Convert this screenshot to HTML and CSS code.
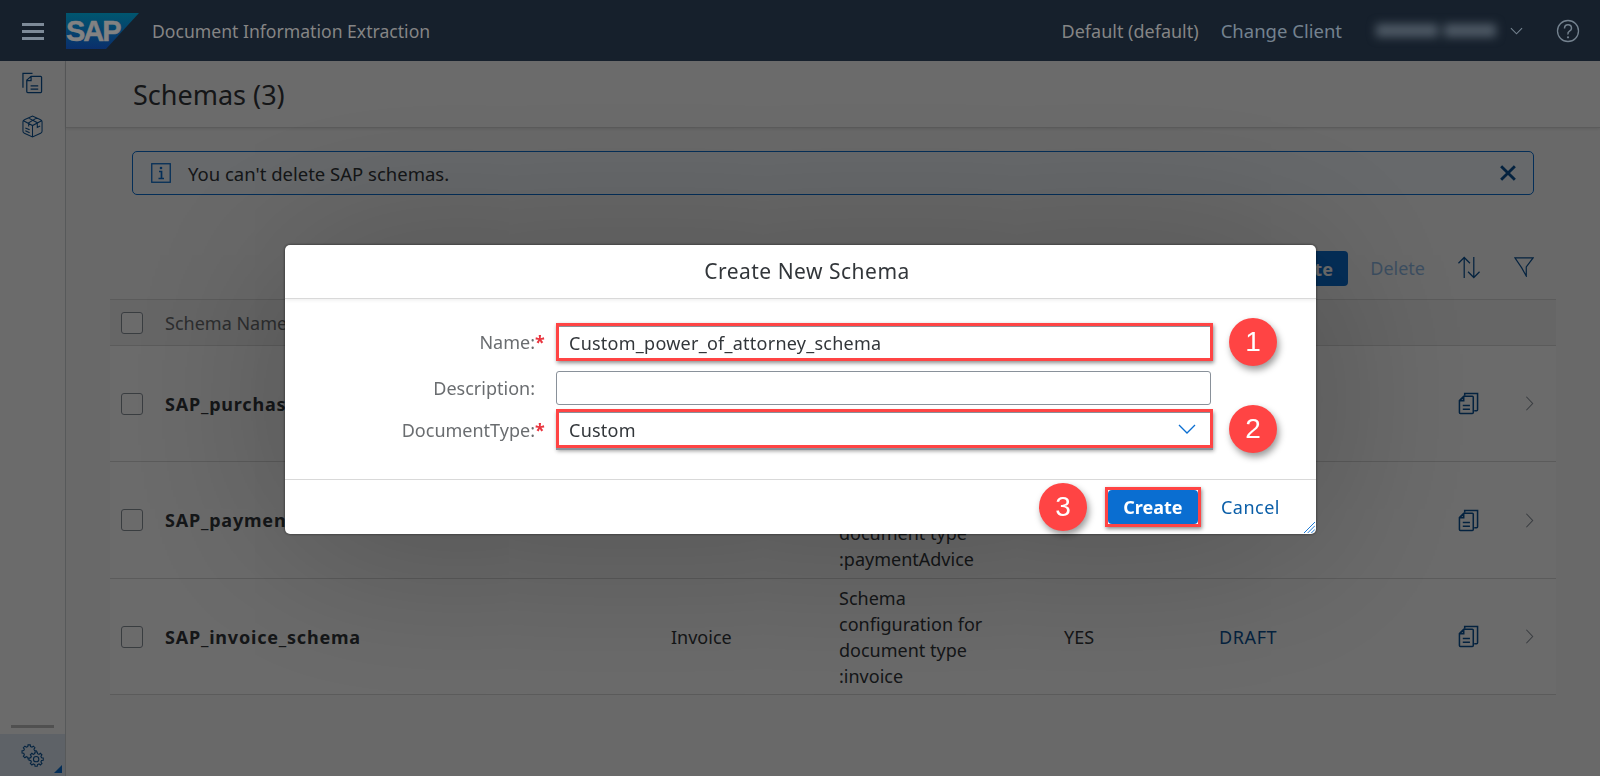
FILE: index.html
```html
<!DOCTYPE html>
<html lang="en">
<head>
  <meta charset="UTF-8">
  <meta name="viewport" content="width=device-width, initial-scale=1.0">
  <title>Document Information Extraction</title>
  <link rel="stylesheet" href="styles.css">
</head>
<body>
  <svg class="defs" width="0" height="0">
    <symbol id="copy" viewBox="0 0 22 24">
      <path d="M7 4V1.500H20.500V18.500Q20.500 19.500 19.500 19.500H17" fill="none" stroke="currentColor" stroke-width="1.600"/>
      <path d="M1.500 9 6 4.500H15Q16 4.500 16 5.500V21.500Q16 22.500 15 22.500H2.500Q1.500 22.500 1.500 21.500ZM5 14h7.500M5 18h7.500M6 5V9H2" fill="none" stroke="currentColor" stroke-width="1.600"/>
    </symbol>
    <symbol id="chev-right" viewBox="0 0 10 18">
      <path d="M1.500 1.500 8.500 9 1.500 16.500" fill="none" stroke="currentColor" stroke-width="1.200"/>
    </symbol>
    <path id="cog" d="M5.630-1.400 7.410-1.170 7.410 1.170 5.630 1.400 4.970 2.990 6.070 4.410 4.410 6.070 2.990 4.970 1.400 5.630 1.170 7.410-1.170 7.410-1.400 5.630-2.990 4.970-4.410 6.070-6.070 4.410-4.970 2.990-5.630 1.400-7.410 1.170-7.410-1.170-5.630-1.400-4.970-2.990-6.070-4.410-4.410-6.070-2.990-4.970-1.400-5.630-1.170-7.410 1.170-7.410 1.400-5.630 2.990-4.970 4.410-6.070 6.070-4.410 4.970-2.990Z"/>
  </svg>

  <header class="shell">
    <svg class="burger" viewBox="0 0 22 17"><path d="M0 1.500h22M0 8.500h22M0 15.500h22" stroke="currentColor" stroke-width="3"/></svg>
    <svg class="logo" viewBox="0 0 74 36">
      <defs>
        <linearGradient id="sapblue" x1="0" y1="0" x2="0" y2="1">
          <stop offset="0" stop-color="#00566f"/>
          <stop offset="1" stop-color="#0a2f6c"/>
        </linearGradient>
      </defs>
      <polygon points="0,0 73,0 40,36 0,36" fill="url(#sapblue)"/>
      <text x="0" y="28" class="logo-text">SAP</text>
    </svg>
    <span class="app-title">Document Information Extraction</span>
    <span class="client">Default (default)</span>
    <span class="change-client">Change Client</span>
    <span class="user-blur"><i></i><i></i></span>
    <svg class="user-chev" viewBox="0 0 14 8"><path d="M1 1 7 7 13 1" fill="none" stroke="currentColor" stroke-width="1.200"/></svg>
    <svg class="help" viewBox="0 0 24 24">
      <circle cx="12" cy="12" r="10.500" fill="none" stroke="currentColor" stroke-width="1.300"/>
      <path d="M8.500 9.500Q8.500 5.800 12 5.800T15.500 9.300Q15.500 11 13.500 12.200T12 15.500" fill="none" stroke="currentColor" stroke-width="1.500"/>
      <circle cx="12" cy="18.300" r="1.100" fill="currentColor"/>
    </svg>
  </header>

  <div class="layout">
    <nav class="sidebar">
      <svg class="nav-icon" viewBox="0 0 22 22">
        <path d="M1 16V1H11" fill="none" stroke="currentColor" stroke-width="1.300"/>
        <path d="M5 8 9.500 4H19.500Q20.500 4 20.500 5V20Q20.500 21 19.500 21H6Q5 21 5 20ZM9.500 4V8.500H5M9 14h8M9 17.500h8" fill="none" stroke="currentColor" stroke-width="1.300"/>
      </svg>
      <svg class="nav-icon pack" viewBox="0 0 22 24">
        <path d="M1 7Q1 5.500 2.500 5L11 1 19.500 5Q21 5.500 21 7V17Q21 18.500 19.500 19L11 23 2.500 19Q1 18.500 1 17ZM1.500 6 11 11 20.500 6M11 11V23M6.500 3 16 8V13L19 11.500M15.500 3 7 8V12M3.500 13.500 8 15.500M3.500 16.500 8 18.500" fill="none" stroke="currentColor" stroke-width="1.100"/>
      </svg>
      <div class="nav-rule"></div>
      <div class="nav-settings">
        <svg class="gear" viewBox="0 0 24 24">
          <use href="#cog" transform="translate(8.500 8.300)" class="cog"/>
          <use href="#cog" transform="translate(15.800 15.800)" class="cog"/>
          <circle cx="15.800" cy="15.800" r="2.800" fill="none" stroke="currentColor" stroke-width="1.100"/>
        </svg>
        <span class="corner"></span>
      </div>
    </nav>

    <main class="content">
      <div class="title-bar"><h1>Schemas (3)</h1></div>

      <div class="strip">
        <svg class="strip-icon" viewBox="0 0 20 20">
          <rect x=".75" y=".75" width="18.500" height="18.500" fill="none" stroke="currentColor" stroke-width="1.300"/>
          <path d="M8 8.500h2.500V15.500M7.500 15.500h5.500" fill="none" stroke="currentColor" stroke-width="1.700"/>
          <circle cx="10" cy="5" r="1.300" fill="currentColor"/>
        </svg>
        <span class="strip-text">You can't delete SAP schemas.</span>
        <svg class="strip-close" viewBox="0 0 14 14"><path d="M1 1 13 13M13 1 1 13" stroke="currentColor" stroke-width="2.500"/></svg>
      </div>

      <div class="toolbar">
        <button class="btn-primary">Create</button>
        <span class="btn-off">Delete</span>
        <svg class="tool sort" viewBox="0 0 24 24">
          <path d="M7 23V1.500M1 7.500 7 1.500 13 7.500M17 1V22.500M11 16.500 17 22.500 23 16.500" fill="none" stroke="currentColor" stroke-width="1.300"/>
        </svg>
        <svg class="tool filter" viewBox="0 0 22 22">
          <path d="M1 1H21L13.500 11V21L8.500 12Z" fill="none" stroke="currentColor" stroke-width="1.300"/>
        </svg>
      </div>

      <table class="grid">
        <tr class="head">
          <th class="c-check"><span class="check"></span></th>
          <th class="c-name">Schema Name</th>
          <th class="c-type">Document Type</th>
          <th class="c-desc">Description</th>
          <th class="c-def">Default</th>
          <th class="c-status">Status</th>
          <th class="c-copy"></th>
          <th class="c-nav"></th>
        </tr>
        <tr>
          <td><span class="check"></span></td>
          <td class="name">SAP_purchaseOrder_schema</td>
          <td>Purchase Order</td>
          <td>Schema configuration for document type :purchaseOrder</td>
          <td>YES</td>
          <td class="status">DRAFT</td>
          <td><svg class="row-copy"><use href="#copy"/></svg></td>
          <td><svg class="row-chev"><use href="#chev-right"/></svg></td>
        </tr>
        <tr class="row-tall">
          <td><span class="check"></span></td>
          <td class="name">SAP_paymentAdvice_schema</td>
          <td>Payment Advice</td>
          <td>Schema configuration for document type :paymentAdvice</td>
          <td>YES</td>
          <td class="status">DRAFT</td>
          <td><svg class="row-copy"><use href="#copy"/></svg></td>
          <td><svg class="row-chev"><use href="#chev-right"/></svg></td>
        </tr>
        <tr>
          <td><span class="check"></span></td>
          <td class="name">SAP_invoice_schema</td>
          <td>Invoice</td>
          <td>Schema configuration for document type :invoice</td>
          <td>YES</td>
          <td class="status">DRAFT</td>
          <td><svg class="row-copy"><use href="#copy"/></svg></td>
          <td><svg class="row-chev"><use href="#chev-right"/></svg></td>
        </tr>
      </table>
    </main>
  </div>

  <div class="block-layer"></div>

  <section class="dialog">
    <div class="dialog-head">Create New Schema</div>
    <div class="dialog-form">
      <label class="lbl">Name:<span class="req">*</span></label>
      <div class="marked"><input class="field" type="text" value="Custom_power_of_attorney_schema"></div>
      <span class="callout">1</span>

      <label class="lbl">Description:<span class="req"></span></label>
      <input class="field field-plain" type="text">
      <span></span>

      <label class="lbl lbl-doc">DocumentType:<span class="req">*</span></label>
      <div class="marked marked-select">
        <div class="field select-box">
          <span>Custom</span>
          <svg class="select-chev" viewBox="0 0 18 10"><path d="M1 1 9 9 17 1" fill="none" stroke="currentColor" stroke-width="1.300"/></svg>
        </div>
      </div>
      <span class="callout">2</span>
    </div>
    <div class="dialog-foot">
      <span class="callout">3</span>
      <div class="marked marked-btn"><button class="btn-create">Create</button></div>
      <button class="btn-cancel">Cancel</button>
    </div>
    <svg class="resize" viewBox="0 0 12 12"><path d="M0 12 12 0M4 12 12 4M8 12 12 8" stroke="#0a6ed1" stroke-width="1"/></svg>
  </section>
</body>
</html>
```

FILE: styles.css
```css
* {
  box-sizing: border-box;
}
html, body {
  margin: 0;
  height: 776px;
  overflow: hidden;
}
body {
  font-family: "Noto Sans", "Liberation Sans", sans-serif;
  font-size: 18px;
  color: #32363a;
  background: #fafafa;
  display: flex;
  flex-direction: column;
}
.defs {
  position: absolute;
}

/* shell bar stays above the block layer, so its colours are the dimmed ones */
.shell {
  height: 61px;
  flex: none;
  position: relative;
  z-index: 2;
  background: #16202c;
  color: #858585;
  display: flex;
  align-items: center;
}
.burger {
  width: 22px;
  height: 17px;
  margin-left: 22px;
  margin-top: 1px;
  color: #7d8a98;
}
.logo {
  width: 74px;
  height: 36px;
  margin-left: 22px;
}
.logo-text {
  font: bold 29px "Liberation Sans", sans-serif;
  fill: #828282;
  stroke: #828282;
  stroke-width: .5px;
  letter-spacing: -2px;
}
.app-title {
  margin-left: 12px;
  font-size: 17.600px;
}
.client {
  margin-left: auto;
  font-size: 18px;
}
.change-client {
  margin-left: 22px;
  font-size: 18.500px;
  color: #74828f;
}
.user-blur {
  display: flex;
  gap: 6px;
  margin-left: 34px;
  filter: blur(5px);
}
.user-blur i {
  display: block;
  width: 62px;
  height: 13px;
  background: #4f5a66;
}
.user-blur i + i {
  width: 52px;
}
.user-chev {
  width: 13px;
  height: 8px;
  margin-left: 14px;
  color: #74828f;
}
.help {
  width: 24px;
  height: 24px;
  margin-left: 33px;
  margin-right: 20px;
  color: #74828f;
}

/* side nav */
.layout {
  flex: 1;
  display: flex;
  min-height: 0;
}
.sidebar {
  width: 66px;
  flex: none;
  background: #fff;
  border-right: 1px solid #d0d3d6;
  color: #0a5296;
  display: flex;
  flex-direction: column;
  align-items: center;
}
.nav-icon {
  width: 21px;
  height: 22px;
  margin-top: 11px;
}
.pack {
  margin-top: 21px;
  height: 23px;
}
.nav-rule {
  width: 43px;
  height: 3px;
  background: #bfbfbf;
  margin-top: auto;
  margin-bottom: 6px;
}
.nav-settings {
  width: 100%;
  height: 42px;
  background: #dfeaf5;
  display: flex;
  align-items: center;
  justify-content: center;
  position: relative;
}
.gear {
  width: 23px;
  height: 23px;
}
.cog {
  fill: #dfeaf5;
  stroke: currentColor;
  stroke-width: 1.100px;
}
.corner {
  position: absolute;
  right: 3px;
  bottom: 3px;
  border-style: solid;
  border-width: 0 0 8px 8px;
  border-color: transparent transparent #0a6ed1 transparent;
}

/* page */
.content {
  flex: 1;
  min-width: 0;
  display: flex;
  flex-direction: column;
}
.title-bar {
  height: 67px;
  flex: none;
  padding-left: 67px;
  background: #fff;
  border-bottom: 1px solid #d9d9d9;
  box-shadow: 0 1px 3px rgba(0,0,0,.1);
  display: flex;
  align-items: center;
}
.title-bar h1 {
  margin: 0;
  font-size: 27px;
  font-weight: 400;
}
.strip {
  margin: 23px 0 0 66px;
  width: 1402px;
  height: 44px;
  flex: none;
  border: 1px solid #0a6ed1;
  border-radius: 5px;
  background: #f5faff;
  display: flex;
  align-items: center;
  padding-left: 18px;
}
.strip-icon {
  width: 20px;
  height: 20px;
  color: #0a6ed1;
}
.strip-text {
  margin-left: 17px;
  font-size: 18.500px;
}
.strip-close {
  width: 16px;
  height: 16px;
  margin-left: auto;
  margin-right: 17px;
  color: #0a5296;
}
.toolbar {
  margin: 56px 0 0 0;
  width: 1468px;
  height: 35px;
  flex: none;
  display: flex;
  align-items: center;
  justify-content: flex-end;
}
.btn-primary {
  width: 90px;
  height: 35px;
  border: 0;
  border-radius: 4px;
  background: #0a6ed1;
  color: #fff;
  font: bold 18px "Noto Sans", sans-serif;
}
.btn-off {
  margin-left: 22px;
  margin-bottom: 2px;
  font-size: 18px;
  color: #0a6ed1;
  opacity: .45;
}
.tool {
  color: #0a5296;
  flex: none;
}
.sort {
  width: 24px;
  height: 23px;
  margin-left: 32px;
  margin-bottom: 3px;
}
.filter {
  width: 20px;
  height: 20px;
  margin-left: 33px;
  margin-bottom: 3px;
}

/* table */
.grid {
  margin: 13px 0 0 44px;
  width: 1446px;
  border-collapse: collapse;
  table-layout: fixed;
  background: #fff;
  font-size: 18px;
}
.grid th {
  height: 46px;
  padding: 0;
  text-align: left;
  font-weight: 400;
  color: #6a6d70;
  background: #f2f2f2;
  border-top: 1px solid #d9d9d9;
  border-bottom: 1px solid #d9d9d9;
}
.grid td {
  padding: 0;
  height: 116px;
  line-height: 26px;
  border-bottom: 1px solid #d9d9d9;
}
.grid .row-tall td {
  height: 117px;
}
.grid td:nth-child(1),
.grid th:nth-child(1) {
  padding-left: 11px;
}
.c-check { width: 55px; }
.c-name { width: 506px; }
.c-type { width: 168px; }
.c-desc { width: 225px; }
.c-def { width: 155px; }
.c-status { width: 239px; }
.c-copy { width: 67px; }
.grid td:nth-child(4) {
  padding-right: 55px;
}
.check {
  display: block;
  width: 22px;
  height: 22px;
  border: 1px solid #89919a;
  border-radius: 3px;
  background: #fff;
}
.name {
  font-weight: 700;
  letter-spacing: .8px;
}
.status {
  color: #0a5296;
  letter-spacing: .6px;
}
.row-copy {
  display: block;
  width: 21px;
  height: 23px;
  color: #0a5296;
}
.row-chev {
  display: block;
  width: 9px;
  height: 17px;
  color: #89919a;
}

/* dialog */
.block-layer {
  position: fixed;
  inset: 0;
  background: rgba(0,0,0,.58);
}
.dialog {
  position: fixed;
  left: 285px;
  top: 245px;
  width: 1031px;
  height: 289px;
  background: #fff;
  border-radius: 5px;
  box-shadow: 0 0 3px rgba(0,0,0,.6), 0 10px 180px rgba(0,0,0,.28);
  display: flex;
  flex-direction: column;
}
.dialog-head {
  height: 54px;
  flex: none;
  padding: 0 0 2px 13px;
  border-bottom: 1px solid #d9d9d9;
  box-shadow: 0 1px 4px rgba(0,0,0,.08);
  display: flex;
  align-items: center;
  justify-content: center;
  font-size: 21px;
  letter-spacing: .5px;
}
.dialog-form {
  height: 180px;
  flex: none;
  padding-top: 24px;
  display: grid;
  grid-template-columns: 260px 657px 48px;
  grid-template-rows: 38px 34px 39px;
  column-gap: 11px;
  row-gap: 0;
  align-content: start;
  align-items: center;
}
.dialog-form > :nth-child(3) {
  margin-left: 5px;
}
.dialog-form > :nth-child(n+4):nth-child(-n+6) {
  margin-top: 10px;
  margin-bottom: -10px;
}
.dialog-form > :nth-child(n+7) {
  margin-top: 14px;
  margin-bottom: -14px;
}
.dialog-form > .callout:nth-child(9) {
  margin-left: 5px;
}
.lbl {
  text-align: right;
  color: #6a6d70;
  font-size: 18px;
}
.dialog-form > .lbl-doc {
  margin-top: 16px;
  margin-bottom: -14px;
}
.req {
  display: inline-block;
  width: 10px;
  color: #e9353f;
  font-weight: 700;
  text-align: center;
}
.marked {
  border: 3px solid #ff4444;
  box-shadow: 1px 2px 4px rgba(0,0,0,.45);
  height: 38px;
}
.marked-select {
  height: 39px;
  box-shadow: 0 2px 0 #89919a, 1px 3px 4px rgba(0,0,0,.4);
}
.field {
  display: block;
  width: 100%;
  height: 100%;
  padding: 0 10px;
  border: 0;
  border-top: 1px solid #89919a;
  outline: 0;
  background: #fff;
  color: #32363a;
  font: 18px "Noto Sans", sans-serif;
  letter-spacing: .25px;
}
.field-plain {
  width: 655px;
  height: 34px;
  border: 1px solid #89919a;
  border-radius: 3px;
}
.select-box {
  display: flex;
  align-items: center;
  justify-content: space-between;
  padding-right: 14px;
}
.select-box span {
  margin-top: 2px;
}
.select-chev {
  width: 18px;
  height: 10px;
  color: #0a6ed1;
}
.callout {
  width: 48px;
  height: 48px;
  flex: none;
  border-radius: 50%;
  background: #ff4444;
  color: #fff;
  box-shadow: 2px 4px 7px rgba(0,0,0,.4);
  font: 28px/48px "Liberation Sans", sans-serif;
  text-align: center;
}
.dialog-foot {
  flex: 1;
  border-top: 1px solid #d9d9d9;
  display: flex;
  align-items: center;
  justify-content: flex-end;
  padding-right: 36px;
}
.marked-btn {
  width: 96px;
  height: 40px;
  margin-left: 18px;
  padding: 0;
}
.btn-create {
  display: block;
  width: 100%;
  height: 100%;
  border: 0;
  border-radius: 4px;
  background: #0a6ed1;
  color: #fff;
  font: bold 18px "Noto Sans", sans-serif;
}
.btn-cancel {
  margin-left: 20px;
  padding: 0;
  border: 0;
  background: none;
  color: #0a5ea8;
  font: 18px "Noto Sans", sans-serif;
  letter-spacing: .5px;
}
.resize {
  position: absolute;
  right: 1px;
  bottom: 1px;
  width: 11px;
  height: 11px;
}
```
